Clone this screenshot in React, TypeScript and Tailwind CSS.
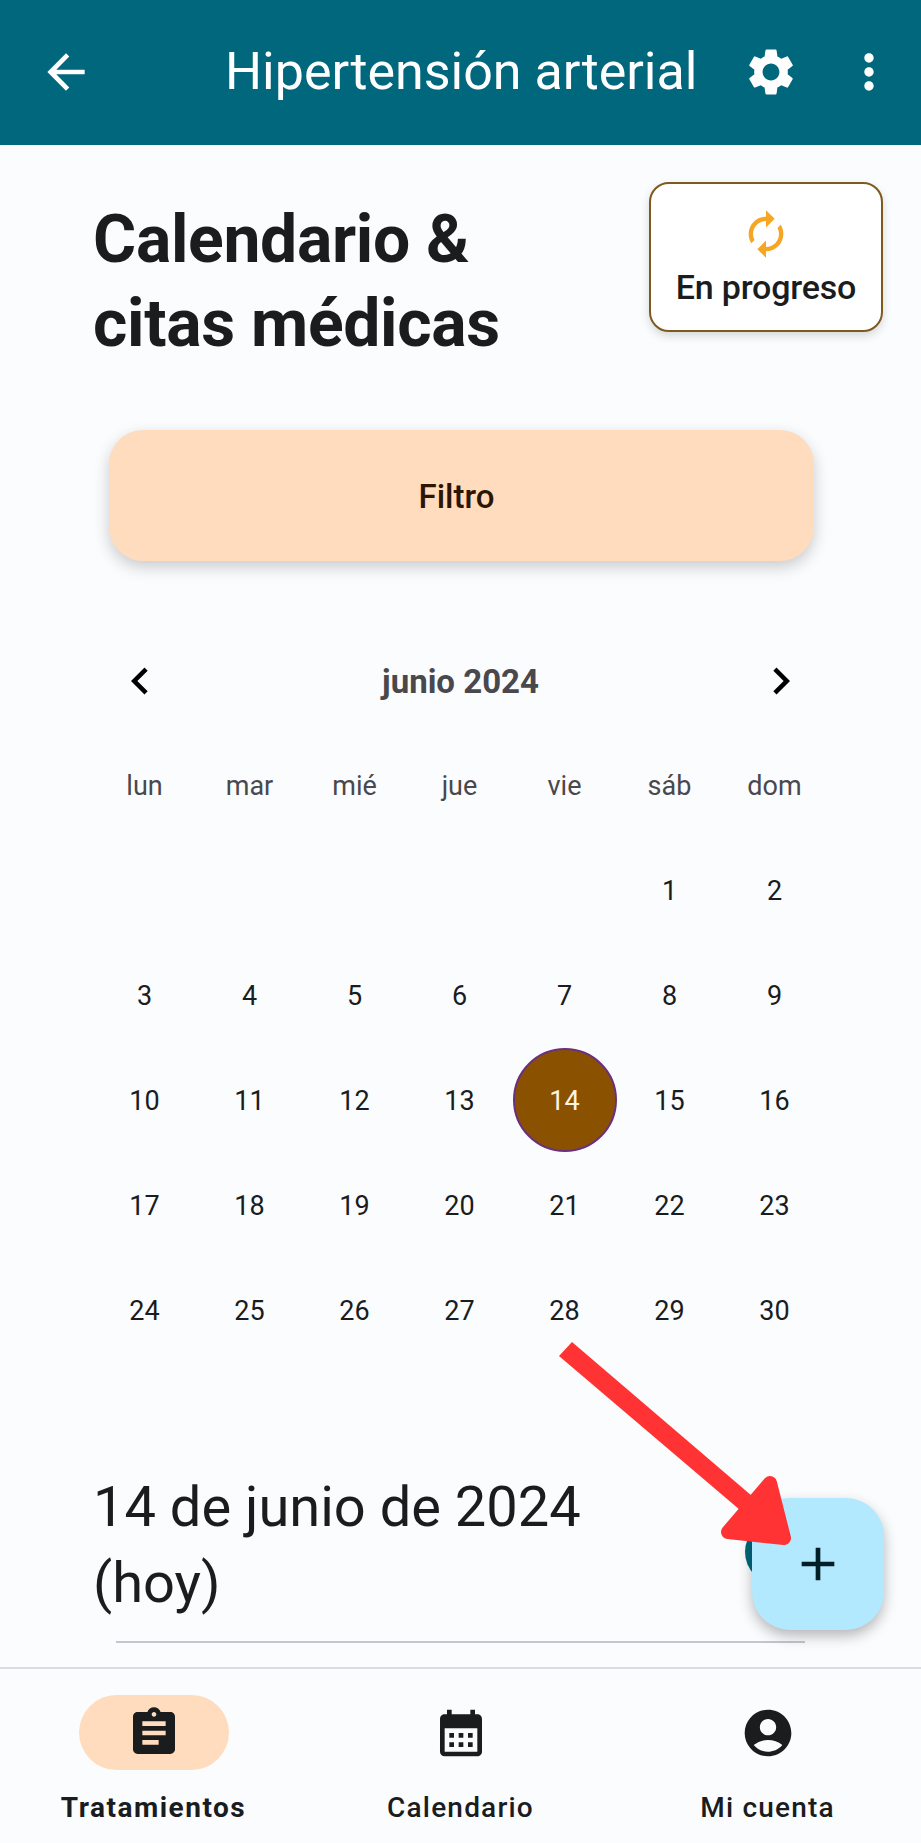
import {
  MdArrowBack,
  MdSettings,
  MdMoreVert,
  MdAutorenew,
  MdChevronLeft,
  MdChevronRight,
  MdAssignment,
  MdCalendarMonth,
  MdAccountCircle,
  MdAdd,
} from 'react-icons/md';

const weekdays = ['lun', 'mar', 'mié', 'jue', 'vie', 'sáb', 'dom'];
const blanks = [0, 1, 2, 3, 4];
const days = Array.from({ length: 30 }, (_, i) => i + 1);

const navItems = [
  { name: 'Tratamientos', icon: MdAssignment, active: true },
  { name: 'Calendario', icon: MdCalendarMonth, active: false },
  { name: 'Mi cuenta', icon: MdAccountCircle, active: false },
];

export default function App() {
  return (
    <div className="relative flex h-[1843px] w-[921px] flex-col overflow-hidden bg-[#fbfcfe] font-['Roboto',sans-serif] text-[#1a1c1e]">
      {/* Top bar */}
      <header className="flex h-[145px] shrink-0 items-center bg-[#00677c] pb-[1px] text-white">
        <MdArrowBack className="ml-[38px] h-[56px] w-[56px]" />
        <h1 className="ml-[131px] text-[52px] font-normal leading-[64px]">Hipertensión arterial</h1>
        <MdSettings className="ml-[46px] h-[56px] w-[56px]" />
        <MdMoreVert className="ml-[42px] h-[56px] w-[56px]" />
      </header>

      {/* Content */}
      <main className="min-h-0 flex-1 overflow-hidden">
        <div className="flex items-start justify-between pl-[93px] pr-[38px] pt-[37px]">
          <h2 className="pt-[16px] text-[66px] font-bold leading-[84px] tracking-[-0.3px]">
            Calendario &amp;
            <br />
            citas médicas
          </h2>
          <div className="flex h-[150px] w-[234px] flex-col items-center rounded-[20px] border-[2.5px] border-[#7d5a1e] bg-white pt-[24px] shadow-[0_4px_10px_rgba(0,0,0,0.15)]">
            <MdAutorenew className="h-[52px] w-[52px] text-[#f5a623]" />
            <span className="mt-[7px] text-[34px] font-medium leading-[40px] tracking-[-0.2px]">En progreso</span>
          </div>
        </div>

        <div className="ml-[109px] mt-[64px] flex h-[131px] w-[705px] items-center justify-center rounded-[34px] bg-[#ffdcbe] pr-[10px] pt-[3px] text-[33px] font-medium text-[#2c1600] shadow-[0_6px_16px_rgba(0,0,0,0.2)]">
          Filtro
        </div>

        {/* Calendar */}
        <section className="ml-[92px] mt-[67px] w-[735px]">
          <div className="flex h-[105px] items-center justify-between pl-[21px] pr-[19px]">
            <MdChevronLeft className="h-[54px] w-[54px] text-black" />
            <span className="pt-[2px] text-[33px] font-bold text-[#49484c]">junio 2024</span>
            <MdChevronRight className="h-[54px] w-[54px] text-black" />
          </div>
          <div className="grid grid-cols-7 auto-rows-[105px] items-center justify-items-center pt-[1px] text-[27px]">
            {weekdays.map((d) => (
              <span key={d} className="text-[#49484c]">
                {d}
              </span>
            ))}
            {blanks.map((b) => (
              <span key={b} />
            ))}
            {days.map((d) =>
              d === 14 ? (
                <span
                  key={d}
                  className="mb-[4px] flex h-[104px] w-[104px] items-center justify-center rounded-full border-[2.5px] border-[#6b2f80] bg-[#8a5200] pt-[3px] text-[#fff3e0]"
                >
                  {d}
                </span>
              ) : (
                <span key={d}>{d}</span>
              )
            )}
          </div>
        </section>

        <h3 className="ml-[93px] mt-[105px] w-[560px] text-[56px] font-normal leading-[76px]">
          14 de junio de 2024 (hoy)
        </h3>
        <div className="ml-[116px] mt-[20px] h-[2px] w-[689px] bg-[#c4c6cb]" />
      </main>

      {/* Bottom navigation */}
      <nav className="grid h-[176px] shrink-0 grid-cols-3 border-t-2 border-[#dcdce0] bg-[#fbfcfe]">
        {navItems.map((item) => (
          <div key={item.name} className="flex flex-col items-center pt-[26px]">
            <div
              className={
                item.active
                  ? 'flex h-[75px] w-[150px] items-center justify-center rounded-full bg-[#ffdcbe]'
                  : 'flex h-[75px] w-[150px] items-center justify-center rounded-full'
              }
            >
              <item.icon className="h-[56px] w-[56px] text-[#1a1c1e]" />
            </div>
            <span
              className={
                item.active
                  ? 'mt-[20px] text-[28px] font-bold leading-[36px] tracking-[1.5px]'
                  : 'mt-[20px] text-[28px] font-medium leading-[36px] tracking-[1.2px]'
              }
            >
              {item.name}
            </span>
          </div>
        ))}
      </nav>

      {/* Floating action button, the chip peeking behind it and the red annotation */}
      <div className="absolute left-[745px] top-[1520px] h-[64px] w-[64px] rounded-full bg-[#00677c]" />
      <button className="absolute left-[752px] top-[1498px] flex h-[132px] w-[132px] items-center justify-center rounded-[38px] bg-[#b3e9ff] text-[#001f27] shadow-[0_6px_14px_rgba(0,0,0,0.28)]">
        <MdAdd className="h-[56px] w-[56px]" />
      </button>
      <svg className="absolute left-[550px] top-[1330px]" width="260" height="230" viewBox="550 1330 260 230">
        <polygon points="572,1342 559,1356 740,1510 752,1496" fill="#ff3333" />
        <polygon points="770,1483 784,1538 728,1532" fill="#ff3333" stroke="#ff3333" strokeWidth="14" strokeLinejoin="round" />
      </svg>
    </div>
  );
}
